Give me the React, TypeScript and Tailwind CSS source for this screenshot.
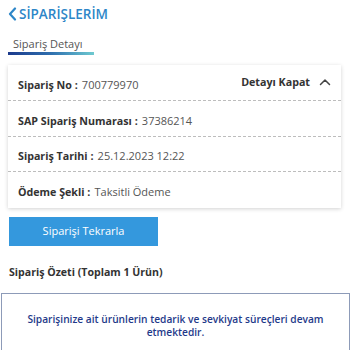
import React from "react";

export default function App() {
  const rows: { k: string; v: string; h: string }[] = [
    { k: "SAP Sipariş Numarası :", v: "37386214", h: "h-[36px]" },
    { k: "Sipariş Tarihi :", v: "25.12.2023 12:22", h: "h-[35px]" },
    { k: "Ödeme Şekli :", v: "Taksitli Ödeme", h: "h-[36px]" },
  ];
  return (
    <div className="w-[350px] h-[350px] bg-white overflow-hidden" style={{ fontFamily: '"Open Sans", sans-serif' }}>
      <div className="pl-[8px] pt-[4px] flex items-center h-[24px] text-[#2d86c8]">
        <svg width="9" height="14" viewBox="0 0 9 14" className="mr-[2px]">
          <path d="M7 1.5 L2 7 L7 12.5" fill="none" stroke="#2d86c8" strokeWidth="2.2" strokeLinecap="round" strokeLinejoin="round" />
        </svg>
        <span className="text-[13.5px] font-semibold leading-[20px]">SİPARİŞLERİM</span>
      </div>
      <div className="pl-[8px] pt-[13px]">
        <div className="w-[86px]">
          <div className="pl-[5px] text-[11px] text-[#555] leading-[14px]">Sipariş Detayı</div>
          <div className="h-[3px] mt-[1px] bg-gradient-to-r from-[#1c3a8c] via-[#2f6fae] to-[#6fcad0]" />
        </div>
      </div>
      <div className="ml-[8px] mt-[10px] w-[333px] bg-white shadow-[0_1px_4px_rgba(0,0,0,0.18)]">
        <div className="h-[36px] px-[10px] flex items-center justify-between border-b border-dashed border-[#bdbdbd] text-[#333]">
          <div>
            <span className="font-bold text-[10.7px]">Sipariş No :</span>{" "}
            <span className="text-[#555] text-[11px]">700779970</span>
          </div>
          <div className="flex items-center font-bold text-[10.7px]">
            Detayı Kapat
            <svg width="12" height="8" viewBox="0 0 12 8" className="ml-[9px]">
              <path d="M1.5 6.5 L6 2 L10.5 6.5" fill="none" stroke="#444" strokeWidth="1.5" strokeLinecap="round" strokeLinejoin="round" />
            </svg>
          </div>
        </div>
        {rows.map((r, i) => (
          <div
            key={r.k}
            className={
              i < rows.length - 1
                ? `${r.h} px-[10px] flex items-center border-b border-dashed border-[#bdbdbd] text-[#333]`
                : `${r.h} px-[10px] flex items-center text-[#333]`
            }
          >
            <div>
              <span className="font-bold text-[10.7px]">{r.k}</span>{" "}
              <span className="text-[#555] text-[11px]">{r.v}</span>
            </div>
          </div>
        ))}
      </div>
      <button className="ml-[9px] mt-[9px] w-[149px] h-[29px] bg-[#3498dd] text-white text-[11px] flex items-center justify-center">
        Siparişi Tekrarla
      </button>
      <div className="pl-[9px] mt-[18px] text-[10.6px] font-bold text-[#333] leading-[16px]">Sipariş Özeti (Toplam 1 Ürün)</div>
      <div className="mt-[13px] ml-[1px] w-[349px] h-[70px] border border-[#8d9bb8] pt-[19px] px-[16px] text-center text-[10.2px] font-semibold text-[#1f3a8a] leading-[13px]">
        Siparişinize ait ürünlerin tedarik ve sevkiyat süreçleri devam etmektedir.
      </div>
    </div>
  );
}
